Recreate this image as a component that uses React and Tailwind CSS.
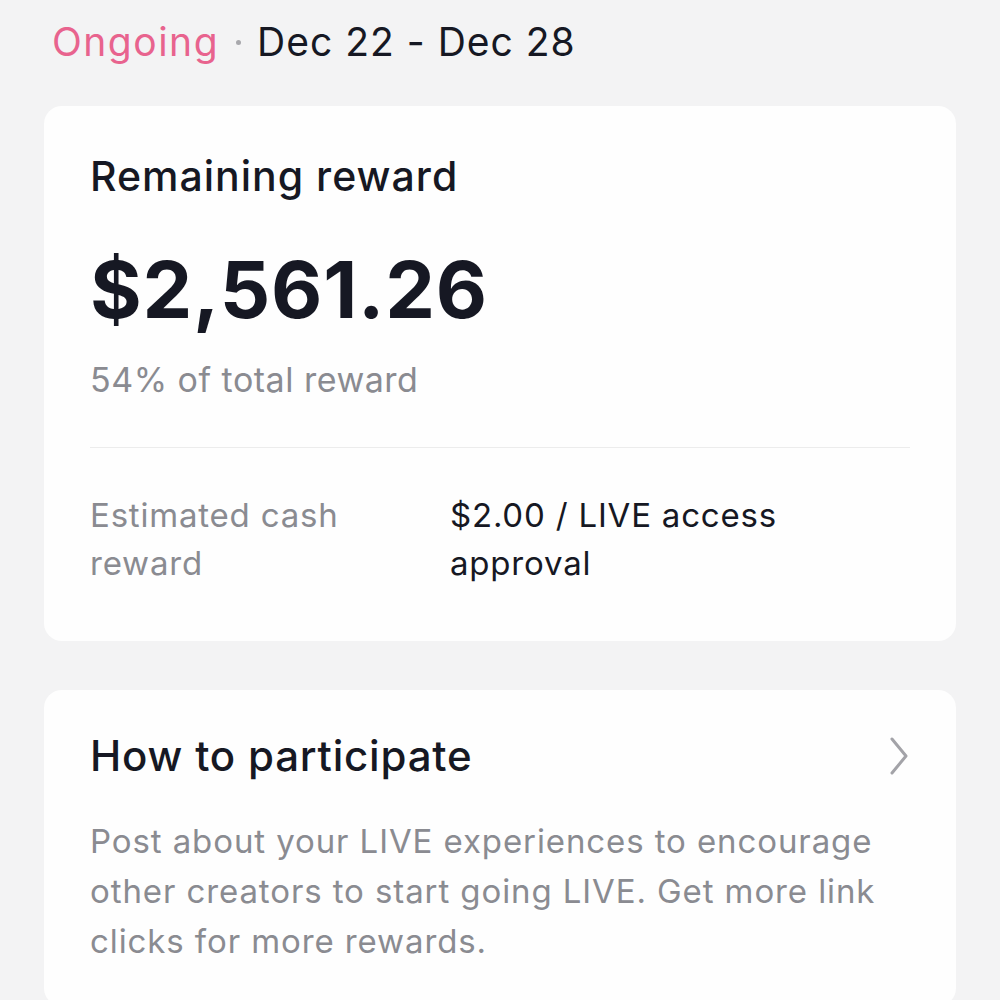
export default function App() {
  return (
    <div className="w-[1000px] h-[1000px] overflow-hidden bg-[#f3f3f4] px-[44px] font-['Inter',sans-serif]">
      {/* Header */}
      <div className="flex items-center pl-[8px] pt-[18px] h-[106px] pb-[40px]">
        <span className="text-[39px] leading-[48px] tracking-[1.5px] text-[#e8638e]">Ongoing</span>
        <span className="ml-[17px] mr-[16px] w-[5px] h-[5px] rounded-full bg-[#a8a8ac]" />
        <span className="text-[39px] leading-[48px] tracking-[1px] text-[#161823]">Dec 22 - Dec 28</span>
      </div>

      {/* Reward card */}
      <div className="rounded-[18px] bg-[#fefefe] px-[46px] pt-[46px] pb-[54px]">
        <div className="text-[41px] leading-[48px] font-medium tracking-[1px] text-[#161823]">
          Remaining reward
        </div>
        <div className="mt-[44px] text-[79px] leading-[90px] font-bold tracking-[0.8px] text-[#161823]">
          $2,561.26
        </div>
        <div className="mt-[24px] text-[34px] leading-[44px] tracking-[0.5px] text-[#8a8b91]">
          54% of total reward
        </div>
        <div className="mt-[45px] h-px bg-[#ececec]" />
        <div className="mt-[43px] flex text-[33px] leading-[48px] tracking-[0.8px]">
          <div className="w-[360px] text-[#8a8b91]">
            Estimated cash
            <br />
            reward
          </div>
          <div className="text-[#161823]">
            $2.00 / LIVE access
            <br />
            approval
          </div>
        </div>
      </div>

      {/* How to participate */}
      <div className="mt-[49px] rounded-[18px] bg-[#fefefe] px-[46px] pt-[38px] pb-[40px]">
        <div className="flex items-center justify-between">
          <div className="text-[42px] leading-[56px] font-medium tracking-[0.8px] text-[#161823]">How to participate</div>
          <svg width="18" height="40" viewBox="0 0 18 40" className="mr-[2px]" fill="none">
            <path d="M2 3 L16 20 L2 37" stroke="#a3a3a8" strokeWidth="3" strokeLinecap="round" strokeLinejoin="round" />
          </svg>
        </div>
        <p className="mt-[32px] text-[33px] leading-[50px] tracking-[0.9px] text-[#8a8b91]">
          Post about your LIVE experiences to encourage other creators to start going LIVE. Get more link clicks for more rewards.
        </p>
      </div>
    </div>
  )
}
